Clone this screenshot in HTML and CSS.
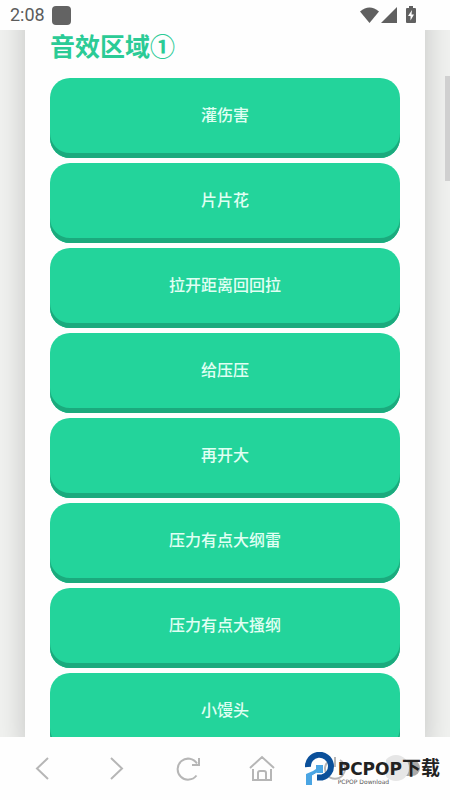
FILE: index.html
```html
<!DOCTYPE html>
<html lang="zh-CN">
<head>
<meta charset="utf-8">
<meta name="viewport" content="width=device-width, initial-scale=1">
<title>音效区域</title>
<link rel="stylesheet" href="styles.css">
</head>
<body>
<header class="status">
  <span class="clock">2:08</span>
  <span class="app-badge"></span>
  <svg class="status-icons" width="56" height="18" viewBox="0 0 56 18" aria-hidden="true">
    <path d="M0 5.500Q9.500-2.500 19 5.500L9.500 17Z"/>
    <path d="M21 17L37 1V17Z"/>
    <path fill-rule="evenodd" d="M47 2h2V0h4v2h2q1 0 1 1v13q0 1-1 1h-8q-1 0-1-1V3q0-1 1-1ZM52 4l-4 6h2.500v4.500l3.500-6h-2.500Z"/>
  </svg>
</header>
<main class="viewport">
  <section class="panel">
    <h1 class="title">音效区域①</h1>
    <div class="sounds">
      <button class="sound" type="button">灌伤害</button>
      <button class="sound" type="button">片片花</button>
      <button class="sound" type="button">拉开距离回回拉</button>
      <button class="sound" type="button">给压压</button>
      <button class="sound" type="button">再开大</button>
      <button class="sound" type="button">压力有点大纲雷</button>
      <button class="sound" type="button">压力有点大搔纲</button>
      <button class="sound" type="button">小馒头</button>
    </div>
  </section>
  <span class="scroll-thumb"></span>
</main>
<nav class="toolbar">
  <button class="tool" type="button" aria-label="后退"><svg width="28" height="28" viewBox="0 0 28 28"><path d="M19 3L8 13.500L19 24"/></svg></button>
  <button class="tool" type="button" aria-label="前进"><svg width="28" height="28" viewBox="0 0 28 28"><path d="M9 3L20 13.500L9 24"/></svg></button>
  <button class="tool" type="button" aria-label="刷新"><svg width="28" height="28" viewBox="0 0 28 28"><path d="M21.500 20.500A10.500 10.500 0 1 1 22 8.500M24 3V10H17"/></svg></button>
  <button class="tool" type="button" aria-label="主页"><svg width="28" height="28" viewBox="0 0 28 28"><path d="M2 13L14 2L26 13M5 14V25H23V14M10 25V18q0-2 2-2h4q2 0 2 2V25"/></svg></button>
  <button class="tool" type="button" aria-label="退出"><svg width="28" height="28" viewBox="0 0 28 28"><path d="M9 5A10 10 0 1 0 19 5M14 2V12"/></svg></button>
  <button class="tool" type="button" aria-label="开关"><svg width="44" height="28" viewBox="0 0 44 28"><rect class="track" x="10" y="5" width="24" height="16" rx="8"/><circle class="knob" cx="10" cy="13" r="13"/></svg></button>
  <div class="brand">
    <svg width="30" height="34" viewBox="0 0 30 34" aria-hidden="true">
      <path class="brand-ring" d="M3 15A11.500 11.500 0 1 1 17 25.500H12"/>
      <path class="brand-light" d="M11 13H18V21H12L7 24V33H1V22L8 19L11 17Z"/>
      <path class="brand-line" d="M2 19L11 13M7 24L12 21"/>
    </svg>
    <div class="brand-text">
      <span class="brand-name">PCPOP<span class="brand-cjk">下载</span></span>
      <span class="brand-sub">PCPOP Download</span>
    </div>
  </div>
</nav>
</body>
</html>
```
FILE: styles.css
```css
* {
  box-sizing: border-box;
}

body {
  margin: 0;
  height: 100vh;
  display: flex;
  flex-direction: column;
  background: #fefefe;
  font-family: Roboto, "Noto Sans CJK SC", sans-serif;
}

.status {
  flex: none;
  height: 30px;
  padding: 0 34px 0 10px;
  display: flex;
  align-items: center;
  gap: 7px;
  color: #5c5c5c;
}

.clock {
  font-size: 18px;
  line-height: 30px;
}

.app-badge {
  width: 19px;
  height: 19px;
  border-radius: 4px;
  background: #636363;
}

.status-icons {
  margin-left: auto;
  fill: #606060;
}

.viewport {
  flex: 1;
  min-height: 0;
  position: relative;
  overflow: hidden;
  padding: 0 25px;
  background: #f1f2f0;
}

.panel {
  min-height: 100%;
  margin-top: -30px;
  padding: 30px 25px 0;
  background: #fefefe;
  box-shadow: 0 0 28px rgba(0, 0, 0, 0.2);
}

.title {
  margin: 0;
  height: 48px;
  font-size: 25px;
  line-height: 36px;
  font-weight: 700;
  color: #2bcb96;
}

.sounds {
  display: grid;
  gap: 5px;
}

.sound {
  height: 80px;
  padding: 0 16px 4px;
  border: 0;
  border-radius: 20px;
  background: #23d49b;
  box-shadow: inset 0 -5px 0 #1baa7d;
  color: #e0fff3;
  font-family: inherit;
  font-size: 16px;
  line-height: 24px;
  font-weight: 500;
}

.scroll-thumb {
  position: absolute;
  top: 46px;
  right: 0;
  width: 5px;
  height: 105px;
  background: #d0d0d0;
}

.toolbar {
  flex: none;
  height: 63px;
  padding: 0 6px;
  position: relative;
  display: grid;
  grid-template-columns: repeat(6, 1fr);
}

.tool {
  padding: 0;
  border: 0;
  background: none;
  display: flex;
  align-items: center;
  justify-content: center;
}

.tool svg {
  fill: none;
  stroke: #b6b6b6;
  stroke-width: 2;
}

.tool .track {
  fill: #aaa;
  stroke: none;
}

.tool .knob {
  fill: #e6e6e6;
  stroke: none;
}

.brand {
  position: absolute;
  right: 10px;
  top: 15px;
  display: flex;
  gap: 3px;
}

.brand-ring {
  fill: none;
  stroke: #0b509a;
  stroke-width: 6;
}

.brand-light {
  fill: #4aa5e3;
}

.brand-line {
  fill: none;
  stroke: #fefefe;
  stroke-width: 1;
}

.brand-text {
  display: flex;
  flex-direction: column;
}

.brand-name {
  padding-top: 6px;
  font-family: "DejaVu Sans", "Noto Sans CJK SC", sans-serif;
  font-size: 17px;
  line-height: 20px;
  font-weight: 700;
  color: #222;
}

.brand-cjk {
  font-size: 19px;
}

.brand-sub {
  font-family: "DejaVu Sans", sans-serif;
  font-size: 6px;
  line-height: 6px;
  color: #555;
}
```
